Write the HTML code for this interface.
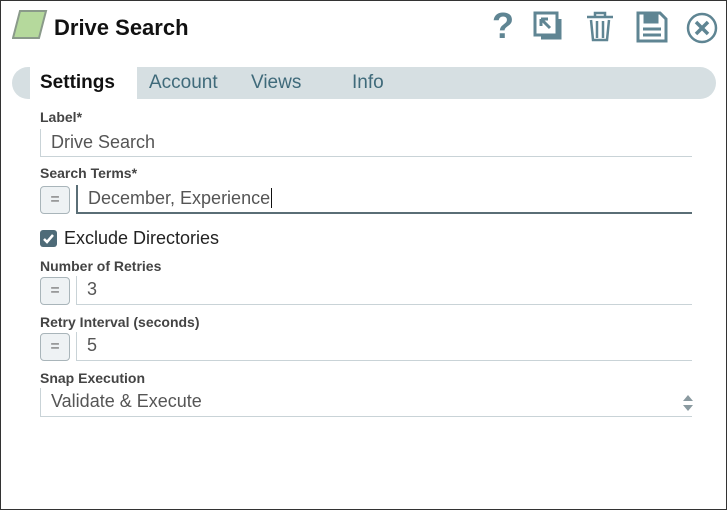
<!DOCTYPE html>
<html><head><style>
*{box-sizing:border-box;margin:0;padding:0}
body{width:727px;height:510px;background:#fff;font-family:"Liberation Sans",sans-serif;position:relative;overflow:hidden}
.frame{position:absolute;left:0;top:0;width:727px;height:510px;border:1px solid #333}
.abs{position:absolute}
.lbl{position:absolute;left:40px;font-size:14px;font-weight:bold;color:#444}
.inp{position:absolute;border-left:1px solid #c9d3d7;border-bottom:1px solid #c9d3d7;font-size:18px;color:#555;padding-left:10px;line-height:26px}
.eq{position:absolute;left:40px;width:30px;height:28px;border:1px solid #a9b5ba;border-radius:4px;background:#eef2f4;color:#666;font-size:16px;text-align:center;line-height:26px}
.tab{position:absolute;top:72px;font-size:19px;color:#3f6a7a}
</style></head><body>
<div class="frame"></div>
<svg class="abs" style="left:12px;top:9px" width="36" height="32"><polygon points="8,2 34,2 27,29 1,29" fill="#b5d99c" stroke="#8a9a8a" stroke-width="2"/></svg>
<div class="abs" style="left:54px;top:15px;font-size:22px;font-weight:bold;color:#111">Drive Search</div>
<div class="abs" style="left:492px;top:5px;font-size:36px;font-weight:bold;color:#5f8593">?</div>
<svg class="abs" style="left:533px;top:11px" width="32" height="32" fill="none" stroke="#5f8593" stroke-width="3"><rect x="2" y="2" width="22" height="22"/><path d="M27 8v19H8"/><path d="M8 8l9 9M8 8v7M8 8h7" stroke-width="3"/></svg>
<svg class="abs" style="left:585px;top:11px" width="30" height="32" fill="none" stroke="#5f8593" stroke-width="2.5"><path d="M2 6h26M10 6V2h10v4M6 9l2 20h14l2-20M12 10v17M18 10v17"/></svg>
<svg class="abs" style="left:636px;top:11px" width="32" height="32" fill="none" stroke="#5f8593" stroke-width="3"><path d="M2 2h22l6 6v22H2z"/><rect x="9" y="3" width="12" height="8" fill="#5f8593"/><path d="M7 18h18M7 24h18"/></svg>
<svg class="abs" style="left:686px;top:12px" width="32" height="32" fill="none" stroke="#5f8593" stroke-width="2.5"><circle cx="16" cy="16" r="14"/><path d="M10 10l12 12M22 10L10 22" stroke-width="3.5"/></svg>
<div class="abs" style="left:12px;top:67px;width:704px;height:32px;background:#d6dfe2;border-radius:16px"></div>
<div class="abs" style="left:30px;top:67px;width:107px;height:32px;background:#fff"></div>
<div class="tab" style="left:40px;color:#111;font-weight:bold">Settings</div>
<div class="tab" style="left:149px">Account</div>
<div class="tab" style="left:251px">Views</div>
<div class="tab" style="left:352px">Info</div>
<div class="lbl" style="top:109px">Label*</div>
<div class="inp" style="left:40px;top:129px;width:652px;height:28px">Drive Search</div>
<div class="lbl" style="top:165px">Search Terms*</div>
<div class="eq" style="top:186px">=</div>
<div class="inp" style="left:76px;top:185px;width:616px;height:29px;border-color:#5a6e76;border-left-width:2px;border-bottom-width:2px">December, Experience<span style="border-left:1px solid #111;margin-left:1px"></span></div>
<div class="abs" style="left:40px;top:230px;width:17px;height:17px;background:#4e6b78;border-radius:3px"><svg width="17" height="17"><path d="M4 9l3 3 6-7" stroke="#fff" stroke-width="2.5" fill="none"/></svg></div>
<div class="abs" style="left:64px;top:228px;font-size:18px;color:#222">Exclude Directories</div>
<div class="lbl" style="top:258px">Number of Retries</div>
<div class="eq" style="top:277px">=</div>
<div class="inp" style="left:76px;top:276px;width:616px;height:29px">3</div>
<div class="lbl" style="top:314px">Retry Interval (seconds)</div>
<div class="eq" style="top:333px">=</div>
<div class="inp" style="left:76px;top:332px;width:616px;height:29px">5</div>
<div class="lbl" style="top:370px">Snap Execution</div>
<div class="inp" style="left:40px;top:388px;width:652px;height:29px">Validate &amp; Execute</div>
<svg class="abs" style="left:682px;top:393px" width="12" height="20" fill="#8a9aa0"><path d="M1 8l5-6 5 6zM1 12l5 6 5-6z"/></svg>
</body></html>
